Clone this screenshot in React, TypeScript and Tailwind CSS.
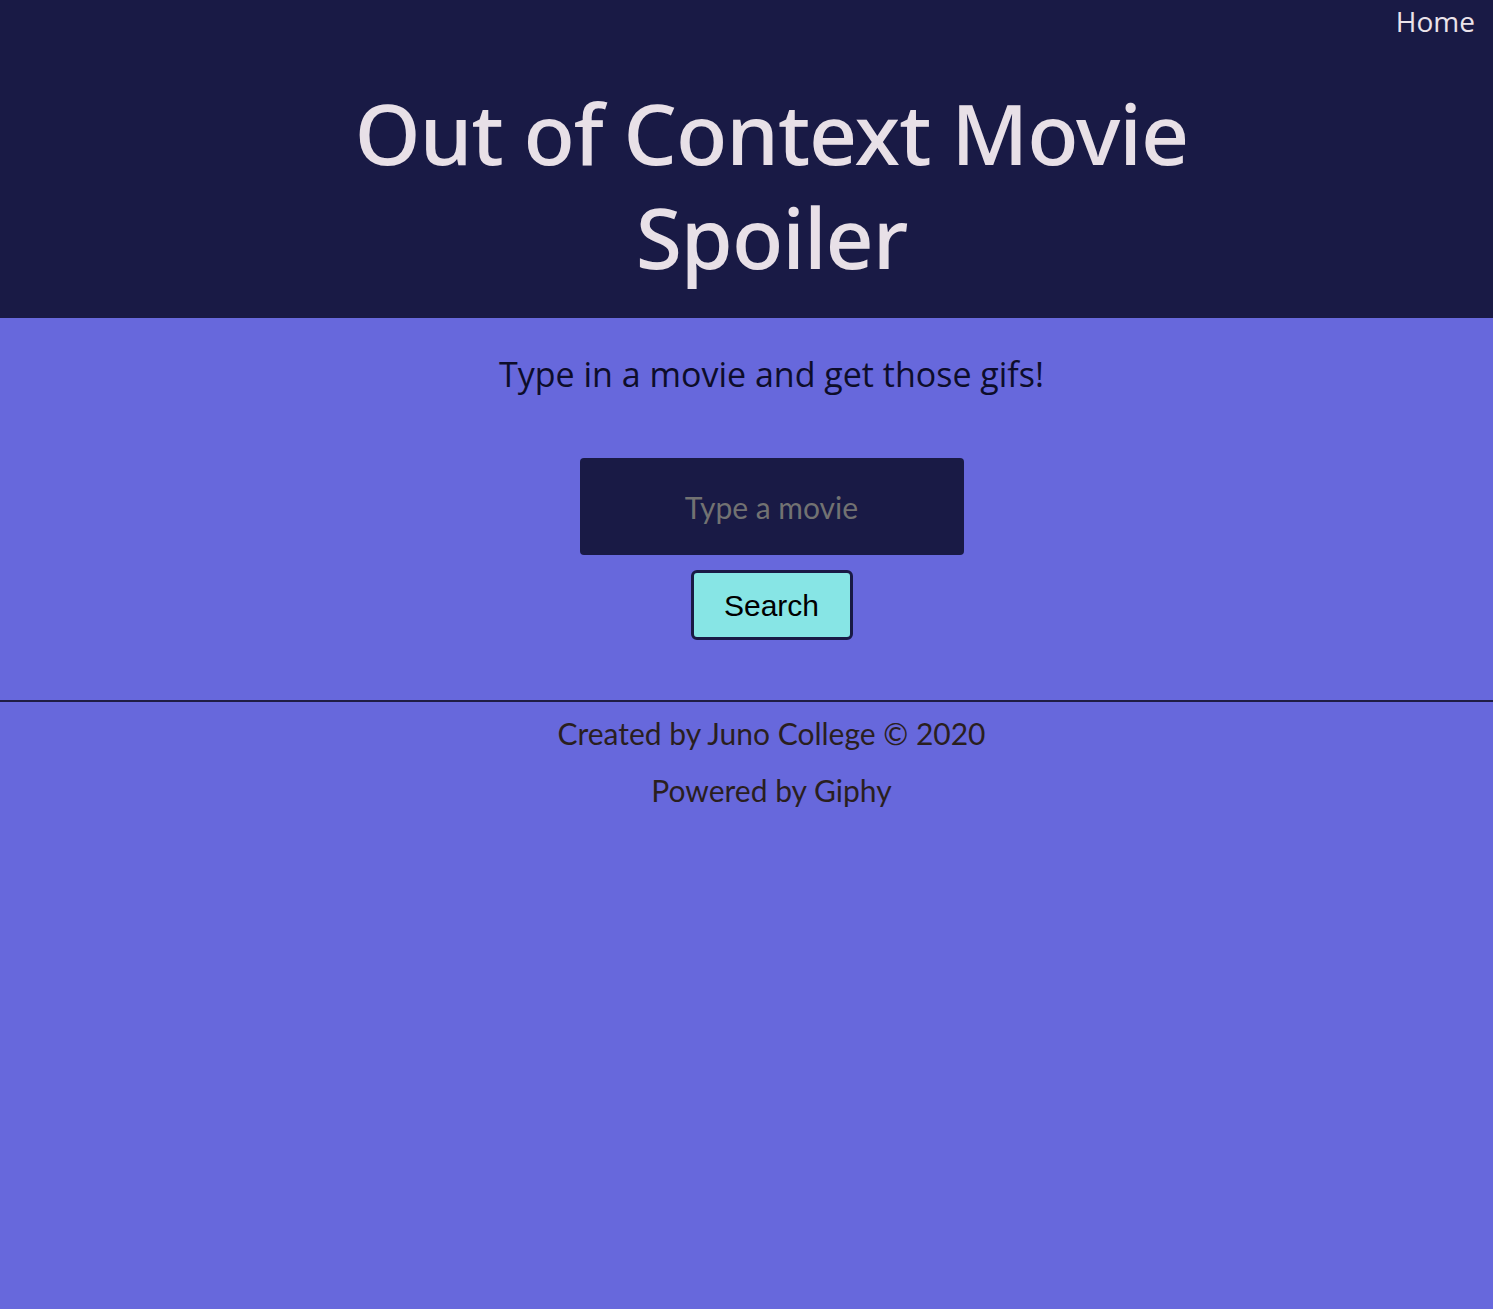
export default function App() {
    return (
        <div className="min-h-[1309px] bg-[#6768dc] flex flex-col">
            {/* Header */}
            <header className="bg-[#191a45] h-[318px] flex flex-col items-center">
                <nav className="w-full flex justify-end pr-[18px] pt-[2px]">
                    <a className="text-[28px] leading-[38px] text-[#ebe3ea] font-['Open_Sans',sans-serif]" href="#">
                        Home
                    </a>
                </nav>
                <div className="w-full flex justify-center pl-[50px]">
                    <h1 className="mt-[41px] text-center text-[#e8e0e7] text-[84px] leading-[104px] font-medium tracking-[-1px] font-['Noto_Sans',sans-serif] w-[900px]">
                        Out of Context Movie Spoiler
                    </h1>
                </div>
            </header>

            {/* Search */}
            <main className="flex flex-col items-center pl-[50px]">
                <p className="mt-[33px] text-[34px] leading-[46px] text-[#0d0d2a] font-['Open_Sans',sans-serif]">
                    Type in a movie and get those gifs!
                </p>
                <input
                    type="text"
                    placeholder="Type a movie"
                    className="mt-[61px] w-[384px] h-[97px] rounded-[4px] bg-[#191a45] text-center text-[30px] text-white placeholder:text-[#727272] font-['Lato',sans-serif] outline-none"
                />
                <button className="mt-[15px] w-[162px] h-[70px] rounded-[6px] border-[3px] border-[#191a45] bg-[#87e5e5] text-[30px] text-black font-['Liberation_Sans',sans-serif]">
                    Search
                </button>
            </main>

            {/* Footer */}
            <footer className="mt-[60px] border-t-2 border-[#1f1d45] flex flex-col items-center pl-[50px] font-['Lato',sans-serif] text-[30px] text-[#2a1f1f]">
                <p className="mt-[11px] leading-[40px]">Created by Juno College © 2020</p>
                <p className="mt-[17px] leading-[40px]">Powered by Giphy</p>
            </footer>
        </div>
    );
}
